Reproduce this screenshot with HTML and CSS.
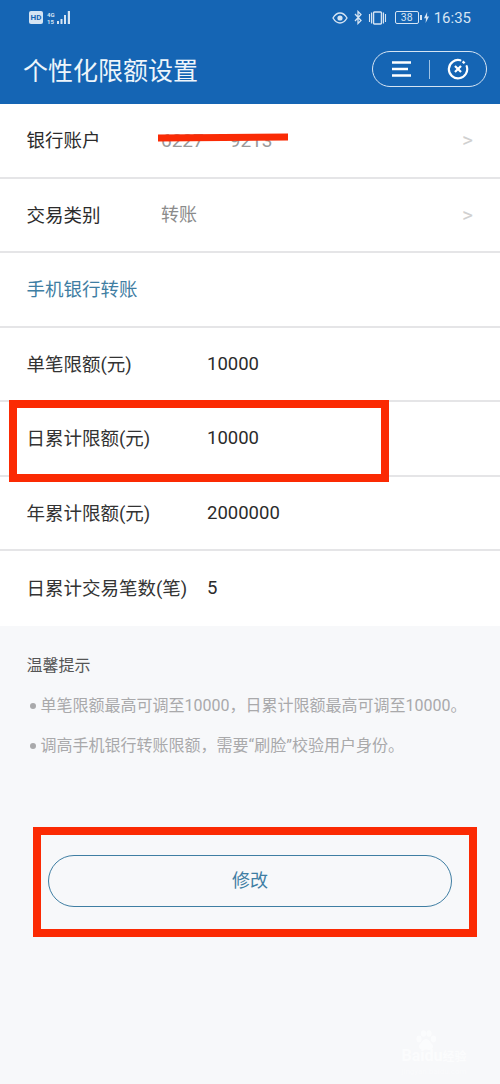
FILE: index.html
```html
<html>
<head>
 <meta charset="utf-8">
 <link rel="stylesheet" href="styles.css">
</head>
<body>
 <div class="page">
  <header class="head">
   <div class="status">
    <div class="status-left">
     <span class="hd">HD</span>
     <span class="net"><span>4G</span><span>15</span></span>
     <svg class="signal" width="15" height="15" viewBox="0 0 15 15"><path d="M1 11h2v3H1zM4.500 9h2v5h-2zM8 5h2v9H8zM11.800 1h2.200v13h-2.200z" fill="#d5e4f3"/></svg>
    </div>
    <div class="status-right">
     <svg width="16" height="12" viewBox="0 0 16 12"><path d="M1 6c2-3.400 4.300-5 7-5s5 1.600 7 5c-2 3.400-4.300 5-7 5S3 9.400 1 6z" fill="none" stroke="#d5e4f3" stroke-width="1.400"/><circle cx="8" cy="6" r="2.600" fill="#d5e4f3"/></svg>
     <svg class="gap-bt" width="8" height="15" viewBox="0 0 8 15"><path d="M1 4l6 6.500-3 3V1.500l3 3L1 11" fill="none" stroke="#d5e4f3" stroke-width="1.300"/></svg>
     <svg class="gap-vib" width="19" height="14" viewBox="0 0 19 14"><rect x="5.500" y="1" width="8" height="12" rx="1" fill="none" stroke="#d5e4f3" stroke-width="1.500"/><path d="M1.500 3v8M3.500 1.500v11M15.500 1.500v11M17.500 3v8" stroke="#d5e4f3" stroke-width="1.100"/></svg>
     <span class="battery">38</span>
     <span class="battery-nub"></span>
     <svg class="bolt" width="5" height="11" viewBox="0 0 5 11"><path d="M3.200 0L0 6.200h2L1.600 11 5 4.600H3z" fill="#d5e4f3"/></svg>
     <span class="clock">16:35</span>
    </div>
   </div>
   <div class="titlebar">
    <h1 class="title">个性化限额设置</h1>
    <div class="capsule">
     <svg width="21" height="16" viewBox="0 0 21 16"><path d="M1 1.500h19M1 8h16M1 14.500h19" stroke="#fff" stroke-width="2.300"/></svg>
     <span class="capsule-line"></span>
     <svg width="22" height="22" viewBox="0 0 24 24"><path d="M14.500 2.500A10 10 0 1 0 21.500 9" fill="none" stroke="#fff" stroke-width="2.400" stroke-linecap="round"/><path d="M17 3.800a10 10 0 0 1 2.200 2" fill="none" stroke="#fff" stroke-width="2.400"/><path d="M8.700 8.700l6.600 6.600M15.300 8.700l-6.600 6.600" stroke="#fff" stroke-width="2.400"/></svg>
    </div>
   </div>
  </header>

  <section class="rows">
   <div class="row">
    <span class="label">银行账户</span>
    <span class="value account"><span>6227</span><span>9213</span></span>
    <span class="arrow">&gt;</span>
   </div>
   <div class="row">
    <span class="label">交易类别</span>
    <span class="value">转账</span>
    <span class="arrow">&gt;</span>
   </div>
   <div class="row"><span class="link-text">手机银行转账</span></div>
   <div class="row">
    <span class="label label-wide">单笔限额(元)</span>
    <span class="amount">10000</span>
   </div>
   <div class="row">
    <span class="label label-wide">日累计限额(元)</span>
    <span class="amount">10000</span>
   </div>
   <div class="row">
    <span class="label label-wide">年累计限额(元)</span>
    <span class="amount">2000000</span>
   </div>
   <div class="row row-last">
    <span class="label label-wide">日累计交易笔数(笔)</span>
    <span class="amount">5</span>
   </div>
  </section>

  <section class="tips">
   <h2 class="tips-title">温馨提示</h2>
   <ul class="tips-list">
    <li>单笔限额最高可调至10000，日累计限额最高可调至10000。</li>
    <li>调高手机银行转账限额，需要“刷脸”校验用户身份。</li>
   </ul>
  </section>

  <div class="action">
   <button class="edit-btn">修改</button>
  </div>

  <!-- red marks drawn on top of the screenshot -->
  <div class="scribble"></div>
  <div class="mark mark-row"></div>
  <div class="mark mark-btn"></div>

  <div class="watermark">
   <svg width="24" height="21" viewBox="0 0 24 21"><g fill="#fff"><ellipse cx="5" cy="9" rx="2.600" ry="3.400"/><ellipse cx="9.500" cy="3.500" rx="2.600" ry="3.300"/><ellipse cx="15" cy="3.500" rx="2.600" ry="3.300"/><ellipse cx="19.500" cy="9" rx="2.600" ry="3.400"/><path d="M12 9c3 0 4 3 6 5s1 6-3 6c-1 0-2-.5-3-.5s-2 .5-3 .5c-4 0-5-4-3-6s3-5 6-5z"/></g></svg>
   <div class="wm-brand">Baidu<span>经验</span></div>
   <div class="wm-url">jingyan.baidu.com</div>
  </div>
 </div>
</body>
</html>
```

FILE: styles.css
```css
html, body {
 margin: 0;
 padding: 0;
}
body {
 background: #f7f8fa;
 font-family: Roboto, "Noto Sans CJK SC", sans-serif;
}
.page {
 position: relative;
 width: 500px;
 height: 1084px;
 overflow: hidden;
}
.head {
 height: 104px;
 box-sizing: border-box;
 background: #1565b4;
 color: #fff;
}
.status {
 display: flex;
 justify-content: space-between;
 align-items: center;
 height: 35px;
 padding: 0 29px;
}
.status-left, .status-right {
 display: flex;
 align-items: center;
}
.hd {
 width: 14px;
 height: 13px;
 border-radius: 2px;
 background: #d5e4f3;
 color: #1565b4;
 font-size: 8px;
 font-weight: 700;
 line-height: 13px;
 text-align: center;
}
.net {
 display: flex;
 flex-direction: column;
 margin-left: 4px;
 color: #d5e4f3;
 font-size: 6px;
 font-weight: 700;
 line-height: 7px;
}
.signal {
 margin-left: 1px;
}
.gap-bt {
 margin-left: 6px;
}
.gap-vib {
 margin-left: 6px;
}
.battery {
 box-sizing: border-box;
 width: 24px;
 height: 13px;
 margin-left: 8px;
 border: 1px solid #d5e4f3;
 border-radius: 2px;
 color: #d5e4f3;
 font-size: 10.500px;
 line-height: 11px;
 text-align: center;
}
.battery-nub {
 width: 2px;
 height: 5px;
 margin-left: 1px;
 background: #d5e4f3;
}
.bolt {
 margin-left: 2px;
}
.clock {
 margin-left: 5px;
 color: #d5e4f3;
 font-size: 15px;
}
.titlebar {
 display: flex;
 justify-content: space-between;
 align-items: center;
 height: 36px;
 margin-top: 16px;
 padding: 0 13px 0 23px;
}
.title {
 margin: 0;
 font-size: 25px;
 font-weight: 400;
 color: #eef5fb;
}
.capsule {
 display: flex;
 align-items: center;
 box-sizing: border-box;
 width: 115px;
 height: 36px;
 padding-left: 18px;
 border: 1.500px solid #d5e4f3;
 border-radius: 18px;
}
.capsule-line {
 width: 1px;
 height: 19px;
 margin: 0 17px 0 17px;
 background: #9fc3e4;
}
.row {
 display: flex;
 align-items: center;
 box-sizing: border-box;
 height: 74.500px;
 padding: 0 27px 0 26.500px;
 background: #fff;
 border-bottom: 2px solid #e5e5e7;
 font-size: 18.500px;
}
.row-last {
 border-bottom: 0;
}
.link-text {
 margin-bottom: 2px;
 color: #3f7ea3;
}
.label {
 width: 134.500px;
 flex: none;
 margin-bottom: 2px;
 color: #2b2b2b;
}
.label-wide {
 width: 180.500px;
 color: #333;
}
.value {
 margin-bottom: 3px;
 color: #8b8b8b;
 font-size: 18px;
}
.account {
 display: flex;
 gap: 26px;
 margin-bottom: 0;
 color: #9a9a9a;
 font-size: 19px;
}
.arrow {
 margin-left: auto;
 color: #d0d0d0;
 font-size: 21px;
}
.amount {
 color: #2b2b2b;
}
.tips {
 padding: 28px 0 0 26.500px;
}
.tips-title {
 margin: 0;
 color: #555;
 font-size: 16px;
 font-weight: 400;
 line-height: 24px;
}
.tips-list {
 margin: 16px 0 0;
 padding: 0;
 list-style: none;
 color: #a9a9ab;
 font-size: 16px;
 line-height: 24px;
}
.tips-list li {
 position: relative;
 margin-bottom: 16px;
 padding-left: 14px;
 white-space: nowrap;
}
.tips-list li::before {
 content: "";
 position: absolute;
 left: 3px;
 top: 9px;
 width: 6px;
 height: 6px;
 border-radius: 50%;
 background: #a9a9ab;
}
.action {
 padding: 81px 48px 0;
}
.edit-btn {
 display: block;
 width: 100%;
 height: 52px;
 padding: 0 0 3px;
 border: 1.500px solid #3f7ea3;
 border-radius: 26px;
 background: transparent;
 color: #3f7ea3;
 font-family: inherit;
 font-size: 18px;
}
.scribble {
 position: absolute;
 left: 158px;
 top: 134px;
 width: 130px;
 height: 7px;
 background: #fa2b05;
 transform: rotate(-0.4deg);
}
.mark {
 position: absolute;
 box-sizing: border-box;
 border: 8.500px solid #fb2a03;
}
.mark-row {
 left: 9px;
 top: 400px;
 width: 380px;
 height: 82px;
}
.mark-btn {
 left: 33px;
 top: 827px;
 width: 444px;
 height: 110px;
}
.watermark {
 position: absolute;
 left: 384px;
 top: 1030px;
 width: 100px;
 color: #fff;
 text-align: center;
 opacity: 0.6;
}
.watermark svg {
 display: block;
 margin: 0 0 -4px 30px;
}
.wm-brand {
 font-size: 16px;
 font-weight: 700;
 line-height: 18px;
 white-space: nowrap;
}
.wm-brand span {
 font-size: 12px;
}
.wm-url {
 font-size: 8px;
 line-height: 12px;
 opacity: 0.7;
}
```
